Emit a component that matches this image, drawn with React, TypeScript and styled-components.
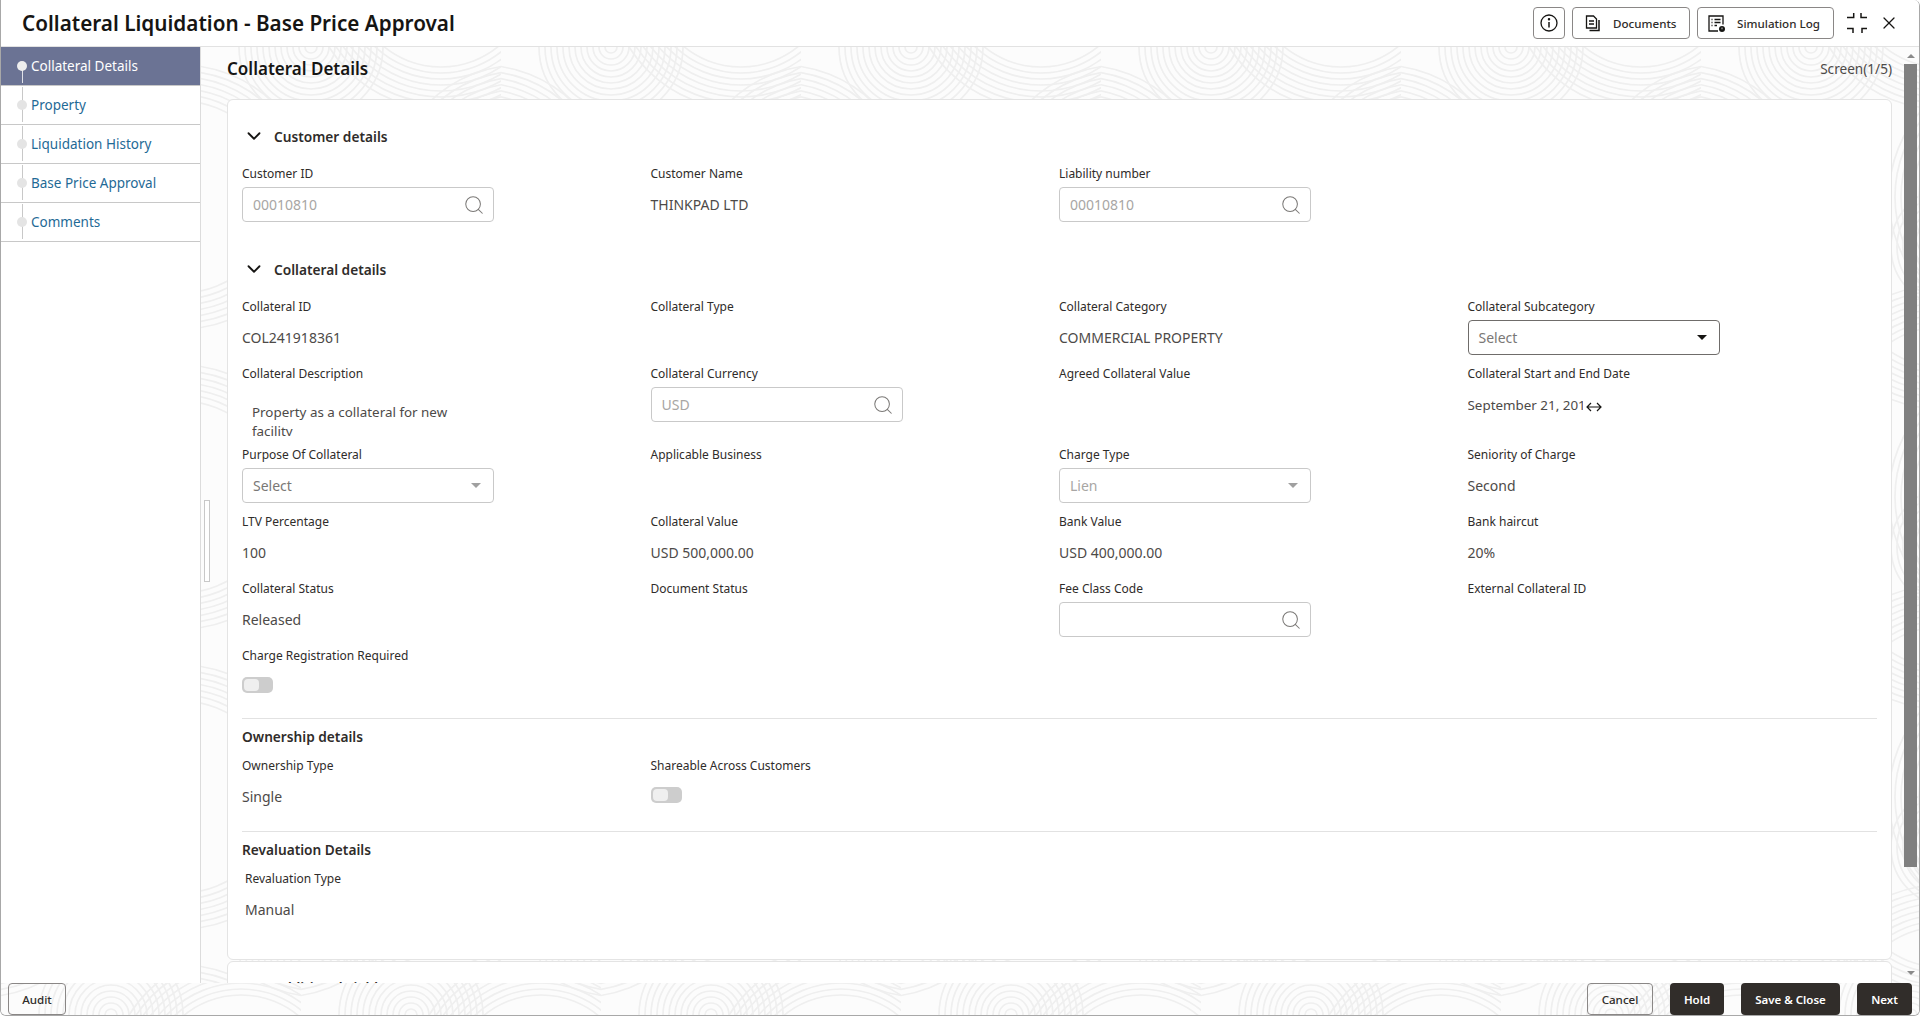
import React from "react";
import styled, { createGlobalStyle } from "styled-components";
import { Search, ChevronDown, X } from "lucide-react";

const rings = (cx: number, cy: number, from: number, to: number) => {
  let out = "";
  for (let r = from; r <= to; r += 6) out += `<circle cx='${cx}' cy='${cy}' r='${r}'/>`;
  return out;
};

const swirl = `<svg xmlns='http://www.w3.org/2000/svg' width='300' height='300' fill='none' stroke='%23efefef' stroke-width='1.7'>${rings(110, 300, 6, 72)}${rings(110, 0, 6, 72)}${rings(-20, 150, 96, 132)}${rings(320, 150, 96, 132)}${rings(250, 200, 6, 60)}${rings(240, -70, 90, 132)}${rings(240, 370, 90, 132)}</svg>`;
const swirlUrl = `url("data:image/svg+xml,${swirl.replace(/</g, "%3C").replace(/>/g, "%3E")}")`;

const GlobalStyle = createGlobalStyle`
  html, body { margin: 0; padding: 0; height: 100%; background: #fff; overflow: hidden; }
  body { font-family: "Noto Sans", "Open Sans", sans-serif; color: #2f2c2a; }
  * { box-sizing: border-box; }
`;

const Shell = styled.div`
  width: 1920px;
  height: 1016px;
  display: flex;
  flex-direction: column;
  border-left: 1px solid #a8a8a8;
  border-right: 1px solid #a8a8a8;
  border-bottom: 1px solid #a8a8a8;
  border-radius: 0 6px 6px 6px;
  overflow: hidden;
`;

const Header = styled.header`
  height: 47px;
  flex: none;
  display: flex;
  align-items: center;
  padding: 0 20px 0 21px;
  border-bottom: 1px solid #e2e2e2;
  background: #fff;
`;

const Title = styled.h1`
  flex: 1;
  margin: 0;
  font-size: 20.7px;
  font-weight: 600;
  color: #161513;
`;

const OutlineButton = styled.button`
  width: ${(p) => p.$w};
  height: 32px;
  padding: ${(p) => p.$pad || "0"};
  margin-left: ${(p) => p.$ml || "0"};
  display: flex;
  align-items: center;
  justify-content: ${(p) => (p.$pad ? "flex-start" : "center")};
  gap: ${(p) => p.$gap || "11px"};
  background: ${(p) => (p.$clear ? "transparent" : "#fff")};
  border: 1px solid #8a8786;
  border-radius: 4px;
  font: 500 11.6px "Noto Sans", sans-serif;
  color: #2f2c2a;
  white-space: nowrap;
`;

const IconSlot = styled.button`
  background: none;
  border: 0;
  padding: 0;
  margin-left: ${(p) => p.$ml || "0"};
  display: flex;
  color: #161513;
`;

const Body = styled.div`
  flex: 1;
  min-height: 0;
  display: flex;
`;

const Sidebar = styled.nav`
  width: 200px;
  flex: none;
  background: #fff;
  border-right: 1px solid #dcdcdc;
`;

const Step = styled.a`
  position: relative;
  display: flex;
  align-items: center;
  height: 39px;
  padding-left: 30px;
  border-bottom: 1px solid #c8c8c8;
  font-size: 13.5px;
  color: ${(p) => (p.$active ? "#fff" : "#1f6a96")};
  background: ${(p) => (p.$active ? "#6b7394" : "transparent")};
`;

const StepDot = styled.span`
  position: absolute;
  left: 16px;
  top: 14px;
  width: 10px;
  height: 10px;
  border-radius: 50%;
  background: ${(p) => (p.$active ? "#eeeeee" : "#e4e4e4")};
`;

const StepLine = styled.span`
  position: absolute;
  left: 21px;
  top: ${(p) => (p.$active ? "23px" : "1px")};
  bottom: 2px;
  width: 1px;
  background: ${(p) => (p.$active ? "#dfe1e8" : "#c8c8c8")};
`;

const Main = styled.main`
  position: relative;
  flex: 1;
  min-width: 0;
  overflow: hidden;
  background-color: #fcfcfc;
  background-image: ${swirlUrl};
  padding: 0 27px 0 26px;
`;

const TopRow = styled.div`
  height: 42px;
  margin-bottom: 10px;
  display: flex;
  align-items: center;
  justify-content: space-between;
`;

const PageTitle = styled.h2`
  margin: 0;
  font-size: 17px;
  font-weight: 600;
  color: #161513;
`;

const ScreenCount = styled.span`
  font-size: 13.6px;
  color: #4d4a48;
`;

const Card = styled.section`
  background: #fff;
  border: 1px solid #e4e4e4;
  border-radius: 6px;
  padding: 0 14px;
  height: ${(p) => p.$h || "auto"};
  margin-bottom: 1px;
`;

const SectionHead = styled.div`
  height: 26px;
  margin: ${(p) => p.$mt} 0 15px;
  padding-left: 1px;
  display: flex;
  align-items: center;
  gap: 9px;
  font-size: 13.7px;
  font-weight: 600;
  color: #2f2c2a;
`;

const FieldGrid = styled.div`
  display: grid;
  grid-template-columns: repeat(4, 408.5px);
`;

const Field = styled.div`
  height: ${(p) => p.$h || "67px"};
  padding-left: ${(p) => p.$inset || "0"};
`;

const Label = styled.div`
  height: 20px;
  line-height: 20px;
  font-size: 12px;
  color: #2f2c2a;
  white-space: nowrap;
`;

const Value = styled.div`
  margin-top: 11px;
  line-height: 20px;
  font-size: 14px;
  color: #4d4a48;
  white-space: nowrap;
`;

const Description = styled.div`
  margin: 19px 0 0 10px;
  width: 220px;
  height: 33px;
  overflow: hidden;
  line-height: 19px;
  font-size: 13.4px;
  color: #4d4a48;
`;

const DateValue = styled(Value)`
  display: flex;
  align-items: center;
`;

const DateClip = styled.span`
  width: 115px;
  overflow: hidden;
  font-size: 13.4px;
`;

const DateArrow = styled.span`
  display: flex;
  margin: 3px 0 0 3px;
`;

const InputBox = styled.div`
  width: 252px;
  height: 35px;
  margin-top: 3px;
  padding: 0 8px 0 10px;
  display: flex;
  align-items: center;
  justify-content: space-between;
  background: #fff;
  border: 1px solid ${(p) => (p.$strong ? "#6f6c6a" : "#c9c9c9")};
  border-radius: 4px;
  font-size: 14px;
  color: ${(p) => p.$color || "#a8a6a4"};
`;

const Caret = styled.span`
  width: 0;
  height: 0;
  margin-right: 4px;
  border-left: 5px solid transparent;
  border-right: 5px solid transparent;
  border-top: 5px solid ${(p) => p.$color || "#a0a0a0"};
`;

const Toggle = styled.div`
  width: 31px;
  height: 16px;
  margin-top: ${(p) => p.$mt || "11px"};
  padding: 2px;
  background: #cdcdcd;
  border-radius: 5px;
`;

const ToggleKnob = styled.div`
  width: 15px;
  height: 12px;
  background: #efefef;
  border-radius: 4px;
`;

const Divider = styled.hr`
  margin: ${(p) => p.$m || "0"};
  border: 0;
  border-top: 1px solid #e2e2e2;
`;

const SubHead = styled.div`
  height: 20px;
  line-height: 20px;
  margin: 8px 0 9px;
  font-size: 13.7px;
  font-weight: 600;
  color: #2f2c2a;
`;

const Footer = styled.footer`
  position: relative;
  height: 32px;
  flex: none;
  display: flex;
  align-items: center;
  padding: 0 7px;
  background-color: #fcfcfc;
  background-image: ${swirlUrl};
  background-position: 0 bottom;
`;

const Spacer = styled.div`
  flex: 1;
`;

const DarkButton = styled.button`
  width: ${(p) => p.$w};
  height: 32px;
  padding: 0;
  margin-left: 17px;
  background: #312d2a;
  border: 0;
  border-radius: 4px;
  font: 600 11.5px "Noto Sans", sans-serif;
  color: #fff;
`;

const ScrollTrack = styled.div`
  position: absolute;
  top: 0;
  right: 2px;
  bottom: 0;
  width: 13px;
  display: flex;
  flex-direction: column;
  align-items: center;
`;

const ScrollUp = styled.span`
  margin-top: 7px;
  border-left: 4px solid transparent;
  border-right: 4px solid transparent;
  border-bottom: 4px solid #8a8a8a;
`;

const ScrollThumb = styled.div`
  width: 13px;
  height: 803px;
  margin-top: 6px;
  background: #808080;
`;

const ScrollDown = styled.span`
  margin: auto 0 8px;
  border-left: 4px solid transparent;
  border-right: 4px solid transparent;
  border-top: 4px solid #8a8a8a;
`;

const Resizer = styled.div`
  position: absolute;
  left: 3px;
  top: 453px;
  width: 6px;
  height: 82px;
  border: 1px solid #c8c8c8;
  background: #fff;
`;

const steps = ["Collateral Details", "Property", "Liquidation History", "Base Price Approval", "Comments"];

const InfoIcon = () => (
  <svg width="20" height="20" viewBox="0 0 20 20" fill="none" stroke="#161513" strokeWidth="1.3">
    <circle cx="10" cy="10" r="8" />
    <path d="M10 9v5.500" strokeWidth="1.5" />
    <circle cx="10" cy="6.300" r="0.6" fill="#161513" />
  </svg>
);

const DocumentsIcon = () => (
  <svg width="17" height="17" viewBox="0 0 17 17" fill="none" stroke="#161513" strokeWidth="1.3">
    <path d="M1.500 1h7l3 3v9h-10z" />
    <path d="M4 6h5M4 9h5" />
    <path d="M14 5v10.500H4.500" strokeWidth="1.500" />
  </svg>
);

const LogIcon = () => (
  <svg width="17" height="17" viewBox="0 0 17 17" fill="none" stroke="#161513" strokeWidth="1.3">
    <path d="M15 9.500V1H1v15h9" />
    <path d="M3.500 4.500h1M3.500 7.500h1M3.500 10.500h1M6.500 4.500h6M6.500 7.500h6M6.500 10.500h2.500" />
    <circle cx="14" cy="14" r="3" fill="#161513" stroke="none" />
    <path d="M14 12.500v1.800" stroke="#fff" strokeWidth="0.8" />
  </svg>
);

const CollapseIcon = () => (
  <svg width="20" height="20" viewBox="0 0 20 20" fill="none" stroke="#161513" strokeWidth="1.5">
    <path d="M0 4.500h6.700V0M14 0v4.500h6M0 15.500h6V20M15 20v-4.500h5" />
  </svg>
);

const SwapArrow = () => (
  <svg width="16" height="12" viewBox="0 0 16 12" fill="none" stroke="#161513" strokeWidth="1.2">
    <path d="M1 6h14M5 2 1 6l4 4M11 2l4 4-4 4" />
  </svg>
);

const Lookup = () => <Search size={22} strokeWidth={1.1} color="#7a7876" />;
const Chevron = () => <ChevronDown size={22} strokeWidth={2} color="#161513" />;

const Lv = ({ label, value }: { label: string; value?: string }) => (
  <Field>
    <Label>{label}</Label>
    {value && <Value>{value}</Value>}
  </Field>
);

export default function App() {
  return (
    <>
      <GlobalStyle />
      <Shell>
        <Header>
          <Title>Collateral Liquidation - Base Price Approval</Title>
          <OutlineButton $w="32px"><InfoIcon /></OutlineButton>
          <OutlineButton $w="118px" $ml="7px" $pad="0 0 0 12px"><DocumentsIcon />Documents</OutlineButton>
          <OutlineButton $w="137px" $ml="7px" $pad="0 0 0 10px" $gap="12px"><LogIcon />Simulation Log</OutlineButton>
          <IconSlot $ml="13px"><CollapseIcon /></IconSlot>
          <IconSlot $ml="12px"><X size={20} strokeWidth={1.5} /></IconSlot>
        </Header>
        <Body>
          <Sidebar>
            {steps.map((s, i) => (
              <Step key={s} $active={i === 0}>
                <StepLine $active={i === 0} />
                <StepDot $active={i === 0} />
                {s}
              </Step>
            ))}
          </Sidebar>
          <Main>
            <Resizer />
            <TopRow>
              <PageTitle>Collateral Details</PageTitle>
              <ScreenCount>Screen(1/5)</ScreenCount>
            </TopRow>
            <Card $h="861px">
              <SectionHead $mt="23px"><Chevron />Customer details</SectionHead>
              <FieldGrid>
                <Field>
                  <Label>Customer ID</Label>
                  <InputBox>00010810<Lookup /></InputBox>
                </Field>
                <Lv label="Customer Name" value="THINKPAD LTD" />
                <Field>
                  <Label>Liability number</Label>
                  <InputBox>00010810<Lookup /></InputBox>
                </Field>
              </FieldGrid>
              <SectionHead $mt="25px"><Chevron />Collateral details</SectionHead>
              <FieldGrid>
                <Lv label="Collateral ID" value="COL241918361" />
                <Lv label="Collateral Type" />
                <Lv label="Collateral Category" value="COMMERCIAL PROPERTY" />
                <Field>
                  <Label>Collateral Subcategory</Label>
                  <InputBox $strong $color="#7a7876">Select<Caret $color="#161513" /></InputBox>
                </Field>
                <Field $h="81px">
                  <Label>Collateral Description</Label>
                  <Description>Property as a collateral for new facility</Description>
                </Field>
                <Field $h="81px">
                  <Label>Collateral Currency</Label>
                  <InputBox>USD<Lookup /></InputBox>
                </Field>
                <Lv label="Agreed Collateral Value" />
                <Field $h="81px">
                  <Label>Collateral Start and End Date</Label>
                  <DateValue>
                    <DateClip>September 21, 2019</DateClip>
                    <DateArrow><SwapArrow /></DateArrow>
                  </DateValue>
                </Field>
                <Field>
                  <Label>Purpose Of Collateral</Label>
                  <InputBox $color="#7a7876">Select<Caret /></InputBox>
                </Field>
                <Lv label="Applicable Business" />
                <Field>
                  <Label>Charge Type</Label>
                  <InputBox>Lien<Caret /></InputBox>
                </Field>
                <Lv label="Seniority of Charge" value="Second" />
                <Lv label="LTV Percentage" value="100" />
                <Lv label="Collateral Value" value="USD 500,000.00" />
                <Lv label="Bank Value" value="USD 400,000.00" />
                <Lv label="Bank haircut" value="20%" />
                <Lv label="Collateral Status" value="Released" />
                <Lv label="Document Status" />
                <Field>
                  <Label>Fee Class Code</Label>
                  <InputBox><span /><Lookup /></InputBox>
                </Field>
                <Lv label="External Collateral ID" />
                <Field>
                  <Label>Charge Registration Required</Label>
                  <Toggle><ToggleKnob /></Toggle>
                </Field>
              </FieldGrid>
              <Divider $m="5px 0 0" />
              <SubHead>Ownership details</SubHead>
              <FieldGrid>
                <Lv label="Ownership Type" value="Single" />
                <Field>
                  <Label>Shareable Across Customers</Label>
                  <Toggle><ToggleKnob /></Toggle>
                </Field>
              </FieldGrid>
              <Divider $m="8px 0 0" />
              <SubHead>Revaluation Details</SubHead>
              <FieldGrid>
                <Field $inset="3px">
                  <Label>Revaluation Type</Label>
                  <Value>Manual</Value>
                </Field>
              </FieldGrid>
            </Card>
            <Card>
              <SectionHead $mt="12px"><Chevron />Additional Fields</SectionHead>
            </Card>
            <ScrollTrack>
              <ScrollUp />
              <ScrollThumb />
              <ScrollDown />
            </ScrollTrack>
          </Main>
        </Body>
        <Footer>
          <OutlineButton $w="58px" $clear>Audit</OutlineButton>
          <Spacer />
          <OutlineButton $w="66px" $clear>Cancel</OutlineButton>
          <DarkButton $w="54px">Hold</DarkButton>
          <DarkButton $w="99px">Save &amp; Close</DarkButton>
          <DarkButton $w="55px">Next</DarkButton>
        </Footer>
      </Shell>
    </>
  );
}
